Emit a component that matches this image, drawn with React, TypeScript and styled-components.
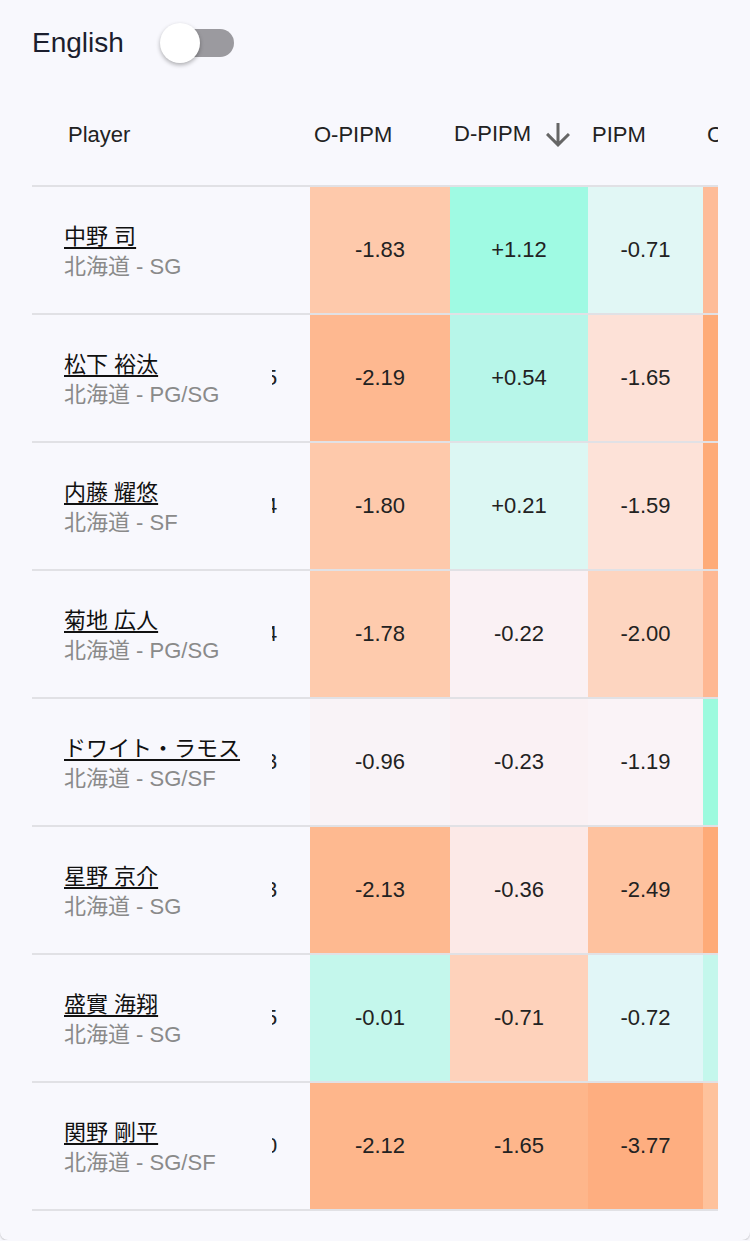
import { useLayoutEffect, useRef } from 'react';
import styled, { createGlobalStyle } from 'styled-components';

const GlobalStyle = createGlobalStyle`
  body {
    margin: 0;
    background: #f8f8fd;
    font-family: "Liberation Sans", "Noto Sans CJK JP", sans-serif;
  }
`;

const Card = styled.div`
  box-sizing: border-box;
  min-height: 1240px;
  padding: 23px 32px 29px;
  background: #f8f8fd;
  border-radius: 0 0 8px 8px;
  box-shadow: 0 1px 2px rgba(0, 0, 0, 0.22);
`;

const LangRow = styled.div`
  display: flex;
  align-items: center;
  height: 40px;
`;

const LangLabel = styled.span`
  font-size: 28px;
  color: #1b1e2e;
`;

const Switch = styled.div`
  position: relative;
  width: 74px;
  height: 40px;
  margin-left: 36px;
`;

const Track = styled.div`
  position: absolute;
  left: 8px;
  right: 0;
  top: 6px;
  height: 28px;
  border-radius: 14px;
  background: #9b9a9f;
`;

const Thumb = styled.div`
  position: absolute;
  left: 0;
  top: 0;
  width: 40px;
  height: 40px;
  border-radius: 50%;
  background: #fff;
  box-shadow: 0 2px 4px rgba(0, 0, 0, 0.3);
`;

const Scroller = styled.div`
  margin-top: 22px;
  overflow-x: auto;
  scrollbar-width: none;
  &::-webkit-scrollbar {
    display: none;
  }
`;

const Table = styled.table`
  table-layout: fixed;
  border-spacing: 0;
  width: 943px;
  font-size: 22px;
  color: #222;
`;

const Th = styled.th<{ $sticky?: boolean }>`
  height: 100px;
  padding: 0 0 0 ${(p) => (p.$sticky ? '36px' : '4px')};
  text-align: left;
  font-weight: 400;
  white-space: nowrap;
  overflow: hidden;
  border-bottom: 2px solid #e1e1e5;
  background: #f8f8fd;
  ${(p) => p.$sticky && 'position: sticky; left: 0; z-index: 2;'}
`;

const SortArrow = styled.svg`
  width: 36px;
  height: 36px;
  margin-left: 9px;
  vertical-align: middle;
  fill: #666;
`;

const PlayerCell = styled.td`
  position: sticky;
  left: 0;
  z-index: 2;
  height: 122px;
  padding: 4px 0 0 32px;
  background: #f8f8fd;
  border-bottom: 2px solid #e1e1e5;
`;

const Name = styled.a`
  display: block;
  line-height: 30px;
  color: #111;
  text-decoration: underline;
  text-decoration-thickness: 2px;
  text-underline-offset: 3px;
`;

const Sub = styled.div`
  line-height: 30px;
  color: #8a8a8a;
`;

const PlainCell = styled.td`
  height: 126px;
  padding: 0;
  text-align: center;
  background: #f8f8fd;
  border-bottom: 2px solid #e1e1e5;
`;

const StatCell = styled.td<{ $bg: string }>`
  height: 126px;
  padding: 0;
  text-align: center;
  background: ${(p) => p.$bg};
  border-bottom: 2px solid #e1e1e5;
`;

type Row = {
  name: string;
  pos: string;
  min: string;
  gp: string;
  stats: [string, string][];
};

const rows: Row[] = [
  { name: '中野 司', pos: 'SG', min: '18.2', gp: '9', stats: [['-1.83', '#fec9ab'], ['+1.12', '#9ffae3'], ['-0.71', '#e1f7f5'], ['-1.40', '#febc98']] },
  { name: '松下 裕汰', pos: 'PG/SG', min: '15.1', gp: '25', stats: [['-2.19', '#feb890'], ['+0.54', '#b7f6e9'], ['-1.65', '#fde1d7'], ['-2.51', '#feab78']] },
  { name: '内藤 耀悠', pos: 'SF', min: '12.7', gp: '24', stats: [['-1.80', '#fec9ab'], ['+0.21', '#dcf7f3'], ['-1.59', '#fde2d8'], ['-2.48', '#feab78']] },
  { name: '菊地 広人', pos: 'PG/SG', min: '10.4', gp: '14', stats: [['-1.78', '#fecbad'], ['-0.22', '#faf1f4'], ['-2.00', '#fdd5c0'], ['-1.92', '#feb893']] },
  { name: 'ドワイト・ラモス', pos: 'SG/SF', min: '27.9', gp: '33', stats: [['-0.96', '#f9f3f7'], ['-0.23', '#faf1f4'], ['-1.19', '#faf3f7'], ['+1.05', '#9cfade']] },
  { name: '星野 京介', pos: 'SG', min: '9.6', gp: '13', stats: [['-2.13', '#feb990'], ['-0.36', '#fce9e7'], ['-2.49', '#fec29f'], ['-2.60', '#feab78']] },
  { name: '盛實 海翔', pos: 'SG', min: '8.8', gp: '15', stats: [['-0.01', '#c4f7ec'], ['-0.71', '#fed2bb'], ['-0.72', '#e1f6f7'], ['+0.18', '#c4f7ec']] },
  { name: '関野 剛平', pos: 'SG/SF', min: '6.3', gp: '30', stats: [['-2.12', '#feb68b'], ['-1.65', '#feb68b'], ['-3.77', '#feae80'], ['-1.70', '#fec29c']] },
];

export default function App() {
  const scrollRef = useRef<HTMLDivElement>(null);

  useLayoutEffect(() => {
    if (scrollRef.current) scrollRef.current.scrollLeft = 152;
  }, []);

  return (
    <>
      <GlobalStyle />
      <Card>
        <LangRow>
          <LangLabel>English</LangLabel>
          <Switch>
            <Track />
            <Thumb />
          </Switch>
        </LangRow>

        <Scroller ref={scrollRef}>
          <Table>
            <colgroup>
              <col style={{ width: 240 }} />
              <col style={{ width: 100 }} />
              <col style={{ width: 90 }} />
              <col style={{ width: 140 }} />
              <col style={{ width: 138 }} />
              <col style={{ width: 115 }} />
              <col style={{ width: 120 }} />
            </colgroup>
            <thead>
              <tr>
                <Th $sticky>Player</Th>
                <Th>MIN</Th>
                <Th>GP</Th>
                <Th>O-PIPM</Th>
                <Th>
                  D-PIPM
                  <SortArrow viewBox="0 0 24 24">
                    <path d="M20 12l-1.41-1.41L13 16.17V4h-2v12.17l-5.58-5.59L4 12l8 8 8-8z" />
                  </SortArrow>
                </Th>
                <Th>PIPM</Th>
                <Th>Clutch</Th>
              </tr>
            </thead>
            <tbody>
              {rows.map((r) => (
                <tr key={r.name}>
                  <PlayerCell>
                    <Name>{r.name}</Name>
                    <Sub>北海道 - {r.pos}</Sub>
                  </PlayerCell>
                  <PlainCell>{r.min}</PlainCell>
                  <PlainCell>{r.gp}</PlainCell>
                  {r.stats.map(([v, bg], i) => (
                    <StatCell key={i} $bg={bg}>{v}</StatCell>
                  ))}
                </tr>
              ))}
            </tbody>
          </Table>
        </Scroller>
      </Card>
    </>
  );
}
